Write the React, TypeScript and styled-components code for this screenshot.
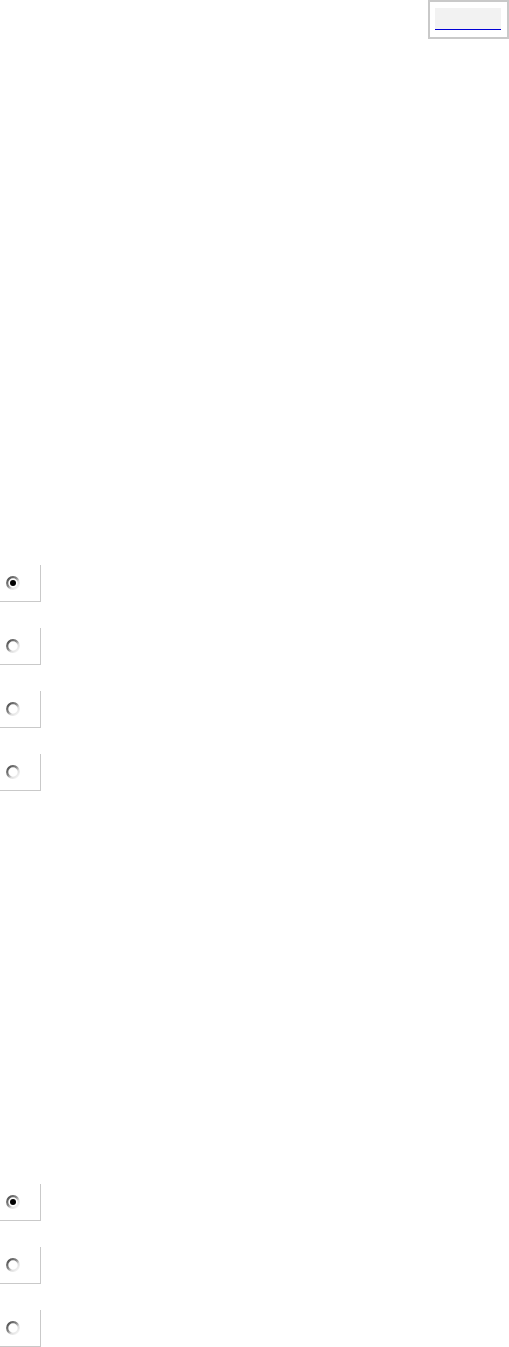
import React from "react";
import styled, { createGlobalStyle } from "styled-components";

const Global = createGlobalStyle`
  html, body { margin: 0; padding: 0; background: #ffffff; }
  body { font-family: "Liberation Sans", Arial, sans-serif; }
`;

const Page = styled.div`
  width: 509px;
  height: 1347px;
  overflow: hidden;
`;

const Header = styled.div`
  display: flex;
  justify-content: flex-end;
`;

const Widget = styled.div`
  width: 81px;
  height: 39px;
  box-sizing: border-box;
  border: 2px solid #c9c9c9;
  padding: 6px 6px 7px 5px;
`;

const Field = styled.div`
  height: 22px;
  box-sizing: border-box;
  background: #f2f2f2;
  border-bottom: 1px solid #0000d6;
`;

const Group = styled.div<{ $top: number }>`
  display: flex;
  flex-direction: column;
  gap: 26px;
  margin-top: ${(p) => p.$top}px;
`;

const Cell = styled.label`
  display: flex;
  align-items: center;
  width: 41px;
  height: 37px;
  box-sizing: border-box;
  border-right: 1px solid #c9c9c9;
  border-bottom: 1px solid #c9c9c9;
  padding-left: 5px;
`;

const Radio = ({ checked }: { checked?: boolean }) => (
  <svg width="16" height="16" viewBox="0 0 16 16">
    <defs>
      <linearGradient id="rg" x1="0.1" y1="0.1" x2="0.9" y2="0.9">
        <stop offset="0" stopColor="#555555" />
        <stop offset="0.4" stopColor="#858585" />
        <stop offset="0.7" stopColor="#dddddd" />
        <stop offset="1" stopColor="#f2f2f2" />
      </linearGradient>
    </defs>
    <circle cx="8" cy="8" r="5.8" fill="#ffffff" stroke="url(#rg)" strokeWidth="2.2" />
    {checked && <circle cx="8" cy="8" r="3" fill="#000000" />}
  </svg>
);

export default function App() {
  return (
    <Page>
      <Global />
      <Header>
        <Widget>
          <Field />
        </Widget>
      </Header>
      <Group $top={526}>
        {[true, false, false, false].map((c, i) => (
          <Cell key={i}>
            <Radio checked={c} />
          </Cell>
        ))}
      </Group>
      <Group $top={393}>
        {[true, false, false].map((c, i) => (
          <Cell key={i}>
            <Radio checked={c} />
          </Cell>
        ))}
      </Group>
    </Page>
  );
}
